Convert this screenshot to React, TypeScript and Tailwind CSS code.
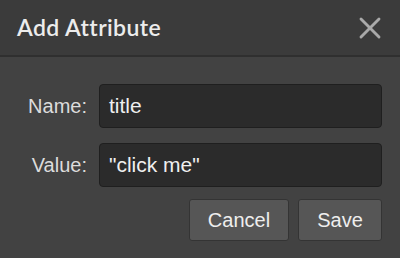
import { X } from "lucide-react";

const FIELDS = [
  { label: "Name:", value: "title" },
  { label: "Value:", value: "\"click me\"" },
];

export default function App() {
  return (
    <div className="w-[400px] h-[258px] flex flex-col bg-[#424242] font-['Liberation_Sans',Arial,sans-serif]">
      {/* header */}
      <div className="h-[57px] flex items-center justify-between pl-[17px] pr-[12px] bg-[#3b3b3b] border-b-2 border-[#2f2f2f]">
        <h1 className="font-['Lato',sans-serif] font-semibold text-[23px] tracking-[0.4px] text-[#ececec]">
          Add Attribute
        </h1>
        <X className="w-[36px] h-[36px] text-[#a9a9a9]" strokeWidth={1.9} />
      </div>

      {/* body */}
      <div className="flex flex-col pt-[27px] pr-[18px]">
        <div className="flex flex-col gap-[15px]">
          {FIELDS.map((f) => (
            <div key={f.label} className="flex items-center">
              <label className="w-[88px] pr-[1px] text-right text-[20px] text-[#dcdcdc]">
                {f.label}
              </label>
              <div className="ml-[11px] flex-1 h-[44px] flex items-center px-[9px] rounded-[4px] bg-[#2b2b2b] border border-[#1f1f1f] text-[21px] text-[#efefef]">
                {f.value}
              </div>
            </div>
          ))}
        </div>

        <div className="flex justify-end gap-[9px] mt-[12px]">
          <button className="w-[100px] h-[42px] rounded-[3px] bg-[#565656] border border-[#343434] text-[20px] text-[#eeeeee]">
            Cancel
          </button>
          <button className="w-[84px] h-[42px] rounded-[3px] bg-[#565656] border border-[#343434] text-[20px] text-[#eeeeee]">
            Save
          </button>
        </div>
      </div>
    </div>
  );
}
